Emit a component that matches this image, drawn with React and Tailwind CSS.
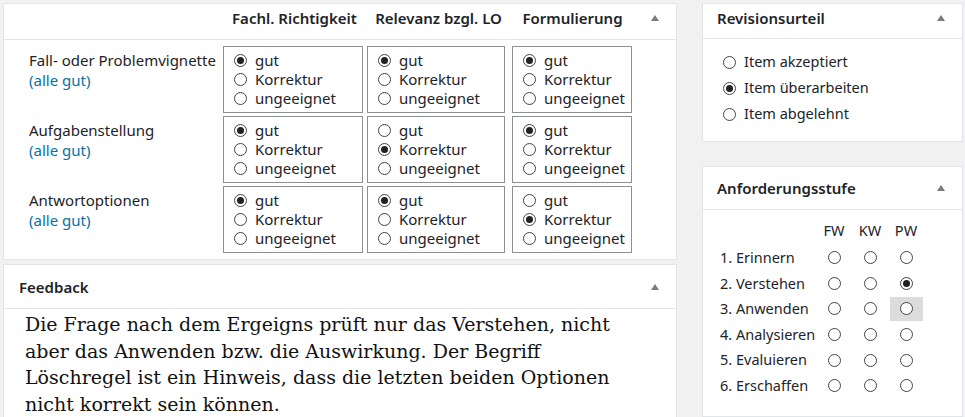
const sans = { fontFamily: '"Noto Sans", "Open Sans", sans-serif' };

const Radio = ({ checked }) => (
  <span className="inline-flex items-center justify-center w-[13px] h-[13px] rounded-full border border-[#444] bg-white shrink-0">
    {checked && <span className="w-[7px] h-[7px] rounded-full bg-[#222]" />}
  </span>
);

const Arrow = () => (
  <svg width="10" height="8" viewBox="0 0 10 8" className="shrink-0">
    <path d="M5 1 L9 7 L1 7 Z" fill="#787c82" />
  </svg>
);

const rows = [
  { label: "Fall- oder Problemvignette", vals: [0, 0, 0] },
  { label: "Aufgabenstellung", vals: [0, 1, 0] },
  { label: "Antwortoptionen", vals: [0, 0, 1] },
];
const opts = ["gut", "Korrektur", "ungeeignet"];
const colW = ["w-[140px]", "w-[138px]", "w-[120px]"];

const OptionBox = ({ sel, w }) => (
  <div className={`${w} h-[67px] border border-[#8c8f94] pl-[10px] pt-[4px] flex flex-col`}>
    {opts.map((o, i) => (
      <div key={o} className="flex items-center gap-[8px] h-[19px] text-[15px] leading-[19px]">
        <Radio checked={sel === i} />
        <span>{o}</span>
      </div>
    ))}
  </div>
);

const levels = ["1. Erinnern", "2. Verstehen", "3. Anwenden", "4. Analysieren", "5. Evaluieren", "6. Erschaffen"];

export default function App() {
  return (
    <div className="w-[965px] h-[417px] overflow-hidden bg-[#f1f1f1] text-[#1d2327] flex items-start gap-[25px] pl-[3px] pt-[3px]" style={sans}>
      <div className="w-[674px] h-[420px] flex flex-col gap-[4px]">
        <div className="bg-white border border-[#e2e4e7] h-[257px] shrink-0">
          <div className="h-[36px] border-b border-[#e5e5e5] flex items-start pt-[4px] pr-[16px]">
            <div className="w-[219px]" />
            <div className="w-[143px] text-center text-[15px] leading-[20px] font-semibold">Fachl. Richtigkeit</div>
            <div className="w-[145px] text-center text-[15px] leading-[20px] font-semibold">Relevanz bzgl. LO</div>
            <div className="w-[123px] text-center text-[15px] leading-[20px] font-semibold">Formulierung</div>
            <div className="flex-1 flex justify-end pt-[6px]"><Arrow /></div>
          </div>
          <div className="flex flex-col gap-[3px] pt-[6px]">
            {rows.map((r) => (
              <div key={r.label} className="flex">
                <div className="w-[219px] pl-[25px] pt-[4px] text-[15px] leading-[20px]">
                  <div>{r.label}</div>
                  <div className="text-[#0073aa]">(alle gut)</div>
                </div>
                <div className="flex gap-[4px]">
                  {r.vals.map((v, i) => (
                    <div key={i} className={i === 2 ? "ml-[3px]" : ""}>
                      <OptionBox sel={v} w={colW[i]} />
                    </div>
                  ))}
                </div>
              </div>
            ))}
          </div>
        </div>
        <div className="bg-white border border-[#e2e4e7] flex-1">
          <div className="h-[44px] border-b border-[#e5e5e5] flex items-start justify-between pt-[12px] pl-[15px] pr-[16px]">
            <span className="text-[15px] leading-[20px] font-semibold">Feedback</span>
            <div className="pt-[6px]"><Arrow /></div>
          </div>
          <div className="pl-[21px] pt-[2px] pr-[50px] text-[19px] leading-[26.7px] text-[#111]" style={{ fontFamily: '"DejaVu Serif", "Liberation Serif", serif' }}>
            Die Frage nach dem Ergeigns prüft nur das Verstehen, nicht aber das Anwenden bzw. die Auswirkung. Der Begriff Löschregel ist ein Hinweis, dass die letzten beiden Optionen nicht korrekt sein können.
          </div>
        </div>
      </div>
      <div className="w-[261px] h-[414px] flex flex-col gap-[24px]">
        <div className="bg-white border border-[#e2e4e7] h-[139px] shrink-0">
          <div className="h-[35px] border-b border-[#e5e5e5] flex items-start justify-between pt-[4px] pl-[14px] pr-[16px]">
            <span className="text-[15px] leading-[20px] font-semibold">Revisionsurteil</span>
            <div className="pt-[6px]"><Arrow /></div>
          </div>
          <div className="pt-[10px] pl-[20px] flex flex-col">
            {["Item akzeptiert", "Item überarbeiten", "Item abgelehnt"].map((t, i) => (
              <div key={t} className="flex items-center gap-[8px] h-[26px] text-[14.5px]">
                <Radio checked={i === 1} />
                <span>{t}</span>
              </div>
            ))}
          </div>
        </div>
        <div className="bg-white border border-[#e2e4e7] flex-1">
          <div className="h-[43px] border-b border-[#e5e5e5] flex items-center justify-between pl-[14px] pr-[16px]">
            <span className="text-[15px] font-semibold">Anforderungsstufe</span>
            <Arrow />
          </div>
          <div className="pl-[17px] pt-[10px] text-[14.5px]">
            <div className="flex h-[22px] items-center mb-[3px]">
              <div className="w-[96px]" />
              <div className="w-[36px] text-center">FW</div>
              <div className="w-[36px] text-center">KW</div>
              <div className="w-[36px] text-center">PW</div>
            </div>
            {levels.map((l, i) => (
              <div key={l} className="flex h-[25.6px] items-center">
                <div className="w-[96px] whitespace-nowrap">{l}</div>
                {[0, 1, 2].map((c) => (
                  <div key={c} className="w-[36px] flex justify-center">
                    <div className={`w-[33px] h-[24px] shrink-0 flex items-center justify-center ${i === 2 && c === 2 ? "bg-[#dcdcdc]" : ""}`}>
                      <Radio checked={i === 1 && c === 2} />
                    </div>
                  </div>
                ))}
              </div>
            ))}
          </div>
        </div>
      </div>
    </div>
  );
}
